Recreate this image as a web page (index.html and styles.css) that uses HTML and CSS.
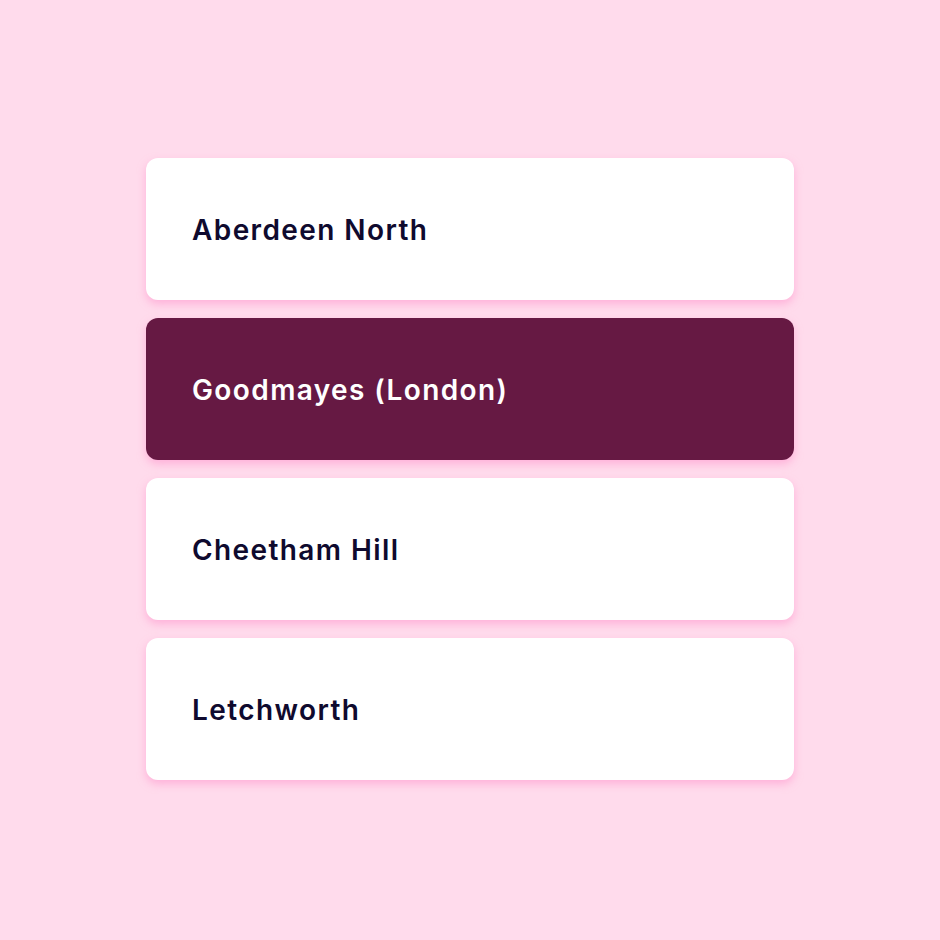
FILE: index.html
```html
<!DOCTYPE html>
<html>
<head>
<meta charset="utf-8">
<link rel="stylesheet" href="styles.css">
</head>
<body>
<div class="list">
  <div class="card">Aberdeen North</div>
  <div class="card active">Goodmayes (London)</div>
  <div class="card">Cheetham Hill</div>
  <div class="card">Letchworth</div>
</div>
</body>
</html>
```
FILE: styles.css
```css
html, body {
  margin: 0;
  padding: 0;
}
body {
  width: 940px;
  height: 940px;
  background: #ffdbec;
  display: flex;
  align-items: center;
  justify-content: center;
  font-family: Inter, "Noto Sans", sans-serif;
}
.list {
  display: flex;
  flex-direction: column;
  gap: 18px;
  width: 648px;
  margin-top: -2px;
}
.card {
  height: 142px;
  box-sizing: border-box;
  padding: 0 46px;
  display: flex;
  align-items: center;
  background: #ffffff;
  border-radius: 12px;
  box-shadow: 0 4px 8px rgba(255, 150, 205, 0.6);
  color: #0f0a2e;
  font-size: 28px;
  font-weight: 600;
  letter-spacing: 1.4px;
  padding-top: 2px;
}
.card.active {
  background: #661943;
  color: #ffffff;
}
```
